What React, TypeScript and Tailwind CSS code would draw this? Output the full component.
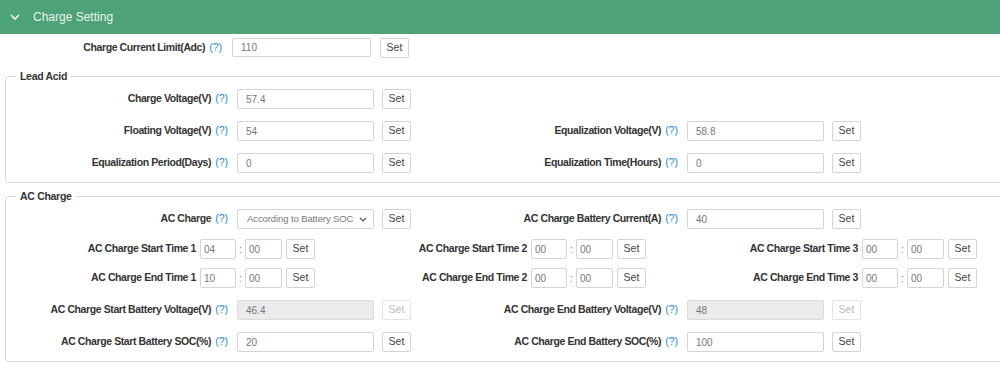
import React from 'react'

const labelCls = 'text-right text-[10.5px] tracking-[-0.4px] font-bold text-[#333] whitespace-nowrap'
const inputCls =
  'h-[20px] border border-[#d4d4d4] rounded-[2px] bg-white text-[10px] text-[#777] flex items-center pl-[8px]'
const setCls =
  'h-[20px] w-[29px] border border-[#d4d4d4] rounded-[2px] bg-white text-[10.5px] text-[#444] flex items-center justify-center'

function Help() {
  return <span className="ml-[4px] font-normal tracking-normal text-[#1a8ad4]">(?)</span>
}

function SetButton({ disabled }: { disabled?: boolean }) {
  return (
    <div className={disabled ? setCls + ' !text-[#bbb] !border-[#e3e3e3]' : setCls}>Set</div>
  )
}

function Param({
  label,
  value,
  disabled,
  select,
}: {
  label: string
  value: string
  disabled?: boolean
  select?: boolean
}) {
  return (
    <div className="flex items-center h-[20px]">
      <div className={labelCls + ' w-[222px]'}>
        {label}
        <Help />
      </div>
      {select ? (
        <div
          className={
            inputCls + ' ml-[9px] w-[137px] justify-between pr-[6px] !pl-[9px] whitespace-nowrap overflow-hidden'
          }
        >
          <span className="text-[9.5px] tracking-[-0.1px]">{value}</span>
          <svg className="shrink-0" width="8" height="5" viewBox="0 0 8 5">
            <path d="M1 1l3 3 3-3" fill="none" stroke="#555" strokeWidth="1.2" />
          </svg>
        </div>
      ) : (
        <div
          className={
            inputCls + ' ml-[9px] w-[137px]' + (disabled ? ' !bg-[#ebebeb] !border-[#dadada]' : '')
          }
        >
          {value}
        </div>
      )}
      <div className="ml-[8px]">
        <SetButton disabled={disabled} />
      </div>
    </div>
  )
}

function TimeParam({ label, h, m }: { label: string; h: string; m: string }) {
  return (
    <div className="flex items-center h-[20px]">
      <div className={labelCls + ' w-[190px]'}>{label}</div>
      <div className={inputCls + ' ml-[4px] w-[36px] !pl-[3px]'}>{h}</div>
      <div className="w-[9px] text-center text-[10px] text-[#777]">:</div>
      <div className={inputCls + ' w-[37px] !pl-[3px]'}>{m}</div>
      <div className="ml-[4px]">
        <SetButton />
      </div>
    </div>
  )
}

function Group({ title, children }: { title: string; children: React.ReactNode }) {
  return (
    <fieldset className="ml-[5px] w-[1010px] border border-[#dcdcdc] rounded-[3px] pb-[9px]">
      <legend className="ml-[10px] px-[4px] text-[10.5px] tracking-[-0.3px] leading-[14px] font-bold text-[#333]">
        {title}
      </legend>
      {children}
    </fieldset>
  )
}

export default function App() {
  return (
    <div className="w-[1000px] h-[370px] overflow-hidden bg-white font-['Liberation_Sans',Arial,sans-serif]">
      <div className="h-[34px] bg-[#4da277] flex items-center pl-[10px]">
        <svg width="10" height="6" viewBox="0 0 10 6">
          <path d="M1 1l4 4 4-4" fill="none" stroke="#fff" strokeWidth="1.6" />
        </svg>
        <span className="ml-[13px] text-[12px] text-[#e8f4ee]">Charge Setting</span>
      </div>

      <div className="mt-[4px] flex items-center h-[19px]">
        <div className={labelCls + ' w-[222px]'}>
          Charge Current Limit(Adc)
          <Help />
        </div>
        <div className={inputCls + ' !h-[19px] ml-[10px] w-[139px]'}>110</div>
        <div className="ml-[9px]">
          <SetButton />
        </div>
      </div>

      <div className="mt-[12px]">
        <Group title="Lead Acid">
          <div className="mt-[6px] grid grid-cols-[450px_450px] gap-y-[12px]">
            <Param label="Charge Voltage(V)" value="57.4" />
            <div />
            <Param label="Floating Voltage(V)" value="54" />
            <Param label="Equalization Voltage(V)" value="58.8" />
            <Param label="Equalization Period(Days)" value="0" />
            <Param label="Equalization Time(Hours)" value="0" />
          </div>
        </Group>
      </div>

      <div className="mt-[6px]">
        <Group title="AC Charge">
          <div className="mt-[6px] grid grid-cols-[450px_450px]">
            <Param label="AC Charge" value="According to Battery SOC" select />
            <Param label="AC Charge Battery Current(A)" value="40" />
          </div>
          <div className="mt-[10px] grid grid-cols-[331px_331px_331px] gap-y-[9px]">
            <TimeParam label="AC Charge Start Time 1" h="04" m="00" />
            <TimeParam label="AC Charge Start Time 2" h="00" m="00" />
            <TimeParam label="AC Charge Start Time 3" h="00" m="00" />
            <TimeParam label="AC Charge End Time 1" h="10" m="00" />
            <TimeParam label="AC Charge End Time 2" h="00" m="00" />
            <TimeParam label="AC Charge End Time 3" h="00" m="00" />
          </div>
          <div className="mt-[12px] grid grid-cols-[450px_450px] gap-y-[12px]">
            <Param label="AC Charge Start Battery Voltage(V)" value="46.4" disabled />
            <Param label="AC Charge End Battery Voltage(V)" value="48" disabled />
            <Param label="AC Charge Start Battery SOC(%)" value="20" />
            <Param label="AC Charge End Battery SOC(%)" value="100" />
          </div>
        </Group>
      </div>
    </div>
  )
}
